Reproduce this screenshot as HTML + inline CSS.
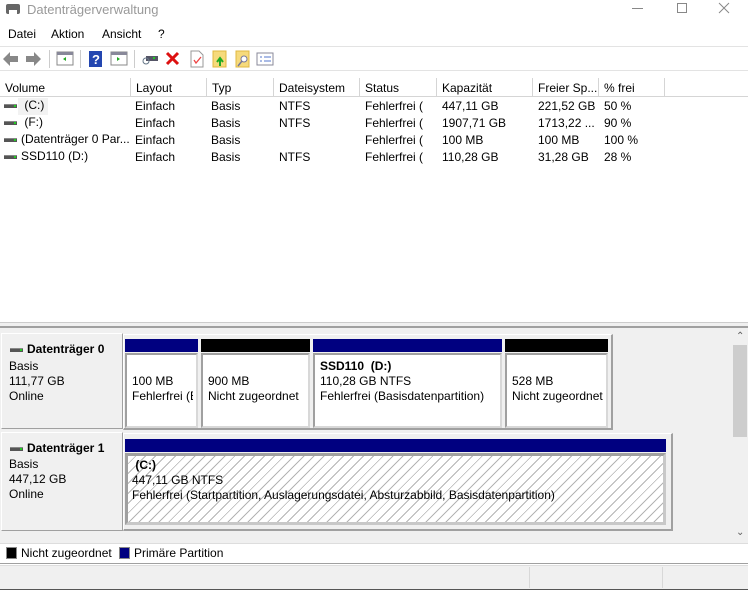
<!DOCTYPE html>
<html><head><meta charset="utf-8"><style>
*{margin:0;padding:0;box-sizing:border-box}
body{width:748px;height:590px;overflow:hidden;background:#fff;font-family:"Liberation Sans",sans-serif;font-size:12px;color:#000;position:relative}
.a{position:absolute;white-space:nowrap}
.hd{position:absolute;top:78px;height:19px;background:#fff;border-right:1px solid #d5d5d5;border-bottom:1px solid #d5d5d5;padding:3px 0 0 5px;font-size:12px}
.cell{position:absolute;white-space:nowrap;overflow:hidden}
.di{display:inline-block;width:13px;height:4px;background:#555;border-top:1px solid #888;vertical-align:middle;margin-right:4px;position:relative}
.di:after{content:"";position:absolute;right:1px;top:0;width:2px;height:2px;background:#2c2}
.part{position:absolute;background:#fff;border:1px solid #a0a0a0}
.bar{position:absolute;height:13px}
.hatch{background:repeating-linear-gradient(135deg,#fff 0 5px,#b4b4b4 5px 6px,#fff 6px 7px)}
</style></head><body>
<!-- title -->
<div class="a" style="left:6px;top:4px;width:14px;height:10px;background:#666;border-radius:2px"></div>
<div class="a" style="left:9px;top:10px;width:8px;height:5px;background:#fff"></div>
<div class="a" style="left:27px;top:2px;font-size:13px;color:#999">Datenträgerverwaltung</div>
<div class="a" style="left:632px;top:8px;width:11px;height:1px;background:#888"></div>
<div class="a" style="left:677px;top:3px;width:10px;height:10px;border:1px solid #888"></div>
<svg class="a" style="left:718px;top:2px" width="12" height="12"><path d="M1 1 L11 11 M11 1 L1 11" stroke="#888" stroke-width="1"/></svg>
<!-- menu -->
<div class="a" style="left:8px;top:27px">Datei</div>
<div class="a" style="left:51px;top:27px">Aktion</div>
<div class="a" style="left:102px;top:27px">Ansicht</div>
<div class="a" style="left:158px;top:27px">?</div>
<div class="a" style="left:0;top:46px;width:748px;height:1px;background:#e3e3e3"></div>
<!-- toolbar -->
<svg class="a" style="left:0;top:48px" width="290" height="22">
<path d="M3 11 L10 4 V8 H18 V14 H10 V18 Z" fill="#888"/>
<path d="M41 11 L34 4 V8 H26 V14 H34 V18 Z" fill="#888"/>
<rect x="49" y="2" width="1" height="18" fill="#ccc"/>
<rect x="57" y="4" width="16" height="13" fill="#fff" stroke="#888"/><rect x="57" y="4" width="16" height="3" fill="#889"/><path d="M66 9 L63 11 L66 13Z" fill="#2a2"/>
<rect x="80" y="2" width="1" height="18" fill="#ccc"/>
<rect x="89" y="3" width="13" height="16" fill="#2346b0"/><text x="92" y="16" fill="#fff" font-size="13" font-weight="bold" font-family="Liberation Sans">?</text>
<rect x="111" y="4" width="16" height="13" fill="#fff" stroke="#888"/><rect x="111" y="4" width="16" height="3" fill="#889"/><path d="M117 9 L120 11 L117 13Z" fill="#2a2"/>
<rect x="134" y="2" width="1" height="18" fill="#ccc"/>
<rect x="146" y="8" width="12" height="5" fill="#556"/><circle cx="146" cy="13" r="3" fill="none" stroke="#678"/><rect x="153" y="9" width="2" height="2" fill="#2c2"/>
<path d="M167 5 L178 16 M178 5 L167 16" stroke="#d11" stroke-width="3"/>
<path d="M191 3 H199 L203 7 V19 H191 Z" fill="#fff" stroke="#999"/><path d="M194 12 L196 15 L201 9" stroke="#e44" fill="none" stroke-width="1.3"/>
<rect x="213" y="3" width="13" height="16" fill="#f6da7c" stroke="#e0b840"/><path d="M220 18 V11 M217 14 L220 10 L223 14" stroke="#2a2" stroke-width="2" fill="none"/>
<rect x="236" y="3" width="13" height="16" fill="#f6da7c" stroke="#e0b840"/><circle cx="244" cy="11" r="3" fill="#fff" stroke="#779"/><path d="M242 13 L238 18" stroke="#779" stroke-width="1.5"/>
<rect x="257" y="5" width="16" height="12" fill="#fff" stroke="#889"/><path d="M260 9 h2 M264 9 h7 M260 13 h2 M264 13 h7" stroke="#5577cc"/>
</svg>
<div class="a" style="left:0;top:70px;width:748px;height:1px;background:#e3e3e3"></div>
<!-- headers -->
<div class="hd" style="left:0;width:131px">Volume</div>
<div class="hd" style="left:131px;width:76px">Layout</div>
<div class="hd" style="left:207px;width:67px">Typ</div>
<div class="hd" style="left:274px;width:86px">Dateisystem</div>
<div class="hd" style="left:360px;width:77px">Status</div>
<div class="hd" style="left:437px;width:96px">Kapazität</div>
<div class="hd" style="left:533px;width:66px">Freier Sp...</div>
<div class="hd" style="left:599px;width:66px">% frei</div>
<div class="hd" style="left:665px;width:83px;border-right:none"></div>
<!-- rows -->
<div class="a" style="left:18px;top:98px;width:30px;height:17px;background:#f2f2f2"></div>
<div class="cell" style="left:4px;top:98px"><span class="di"></span> (C:)</div>
<div class="cell" style="left:4px;top:115px"><span class="di"></span> (F:)</div>
<div class="cell" style="left:4px;top:132px"><span class="di"></span>(Datenträger 0 Par...</div>
<div class="cell" style="left:4px;top:149px"><span class="di"></span>SSD110 (D:)</div>
<div class="cell" style="left:135px;top:98px;line-height:17px">Einfach<br>Einfach<br>Einfach<br>Einfach</div>
<div class="cell" style="left:211px;top:98px;line-height:17px">Basis<br>Basis<br>Basis<br>Basis</div>
<div class="cell" style="left:279px;top:98px;line-height:17px">NTFS<br>NTFS<br>&nbsp;<br>NTFS</div>
<div class="cell" style="left:365px;top:98px;line-height:17px">Fehlerfrei (<br>Fehlerfrei (<br>Fehlerfrei (<br>Fehlerfrei (</div>
<div class="cell" style="left:442px;top:98px;line-height:17px">447,11 GB<br>1907,71 GB<br>100 MB<br>110,28 GB</div>
<div class="cell" style="left:538px;top:98px;line-height:17px">221,52 GB<br>1713,22 ...<br>100 MB<br>31,28 GB</div>
<div class="cell" style="left:604px;top:98px;line-height:17px">50 %<br>90 %<br>100 %<br>28 %</div>
<!-- splitter -->
<div class="a" style="left:0;top:322px;width:748px;height:6px;background:#f0f0f0;border-top:1px solid #ccc;border-bottom:2px solid #a0a0a0"></div>
<!-- lower pane -->
<div class="a" style="left:0;top:328px;width:732px;height:215px;background:#f0f0f0"></div>
<!-- disk 0 -->
<div class="a" style="left:1px;top:333px;width:122px;height:96px;border:1px solid #fff;border-right-color:#a0a0a0;border-bottom-color:#a0a0a0;background:#f0f0f0"></div>
<div class="a" style="left:10px;top:342px;font-weight:bold"><span class="di"></span>Datenträger 0</div>
<div class="a" style="left:9px;top:359px;line-height:15px">Basis<br>111,77 GB<br>Online</div>
<div class="a" style="left:123px;top:334px;width:490px;height:96px;border:1px solid #fff;border-right:2px solid #a0a0a0;border-bottom:2px solid #a0a0a0;background:#f0f0f0"></div>
<div class="bar" style="left:125px;top:339px;width:73px;background:#000080"></div>
<div class="bar" style="left:201px;top:339px;width:109px;background:#000"></div>
<div class="bar" style="left:313px;top:339px;width:189px;background:#000080"></div>
<div class="bar" style="left:505px;top:339px;width:103px;background:#000"></div>
<div class="part" style="left:125px;top:353px;width:73px;height:75px;border:2px solid #d8d8d8;border-left-color:#a0a0a0;border-top-color:#a0a0a0"></div>
<div class="part" style="left:201px;top:353px;width:109px;height:75px;border:2px solid #d8d8d8;border-left-color:#a0a0a0;border-top-color:#a0a0a0"></div>
<div class="part" style="left:313px;top:353px;width:189px;height:75px;border:2px solid #d8d8d8;border-left-color:#a0a0a0;border-top-color:#a0a0a0"></div>
<div class="part" style="left:505px;top:353px;width:103px;height:75px;border:2px solid #d8d8d8;border-left-color:#a0a0a0;border-top-color:#a0a0a0"></div>
<div class="cell" style="left:132px;top:374px;width:61px;line-height:15px">100 MB<br>Fehlerfrei (E</div>
<div class="cell" style="left:208px;top:374px;width:95px;line-height:15px">900 MB<br>Nicht zugeordnet</div>
<div class="cell" style="left:320px;top:359px;line-height:15px"><b>SSD110&nbsp; (D:)</b><br>110,28 GB NTFS<br>Fehlerfrei (Basisdatenpartition)</div>
<div class="cell" style="left:512px;top:374px;width:91px;line-height:15px">528 MB<br>Nicht zugeordnet</div>
<!-- disk 1 -->
<div class="a" style="left:1px;top:432px;width:122px;height:99px;border:1px solid #fff;border-right-color:#a0a0a0;border-bottom-color:#a0a0a0;background:#f0f0f0"></div>
<div class="a" style="left:10px;top:441px;font-weight:bold"><span class="di"></span>Datenträger 1</div>
<div class="a" style="left:9px;top:457px;line-height:15px">Basis<br>447,12 GB<br>Online</div>
<div class="a" style="left:123px;top:433px;width:550px;height:98px;border:1px solid #fff;border-right:2px solid #a0a0a0;border-bottom:2px solid #a0a0a0;background:#f0f0f0"></div>
<div class="bar" style="left:125px;top:439px;width:541px;background:#000080"></div>
<div class="part hatch" style="left:125px;top:453px;width:541px;height:72px;border:3px solid #c8c8c8;border-left-color:#a0a0a0;border-top-color:#a0a0a0"></div>
<div class="cell" style="left:132px;top:458px;line-height:15px"><b>&nbsp;(C:)</b><br>447,11 GB NTFS<br>Fehlerfrei (Startpartition, Auslagerungsdatei, Absturzabbild, Basisdatenpartition)</div>
<!-- scrollbar -->
<div class="a" style="left:732px;top:328px;width:16px;height:215px;background:#f0f0f0"></div>
<div class="a" style="left:733px;top:345px;width:14px;height:92px;background:#cdcdcd"></div>
<div class="a" style="left:736px;top:331px;font-size:10px;color:#606060">&#8963;</div>
<div class="a" style="left:736px;top:527px;font-size:10px;color:#606060">&#8964;</div>
<!-- legend -->
<div class="a" style="left:0;top:543px;width:748px;height:21px;background:#fff;border-top:1px solid #ddd;border-bottom:1px solid #a0a0a0"></div>
<div class="a" style="left:6px;top:547px;width:11px;height:12px;background:#000;border:1px solid #888"></div>
<div class="a" style="left:21px;top:546px">Nicht zugeordnet</div>
<div class="a" style="left:119px;top:547px;width:11px;height:12px;background:#000080;border:1px solid #888"></div>
<div class="a" style="left:134px;top:546px">Primäre Partition</div>
<!-- status -->
<div class="a" style="left:0;top:565px;width:748px;height:25px;background:#f0f0f0;border-top:1px solid #ddd;border-bottom:1px solid #555"></div>
<div class="a" style="left:529px;top:567px;width:1px;height:21px;background:#d8d8d8"></div>
<div class="a" style="left:662px;top:567px;width:1px;height:21px;background:#d8d8d8"></div>
</body></html>
